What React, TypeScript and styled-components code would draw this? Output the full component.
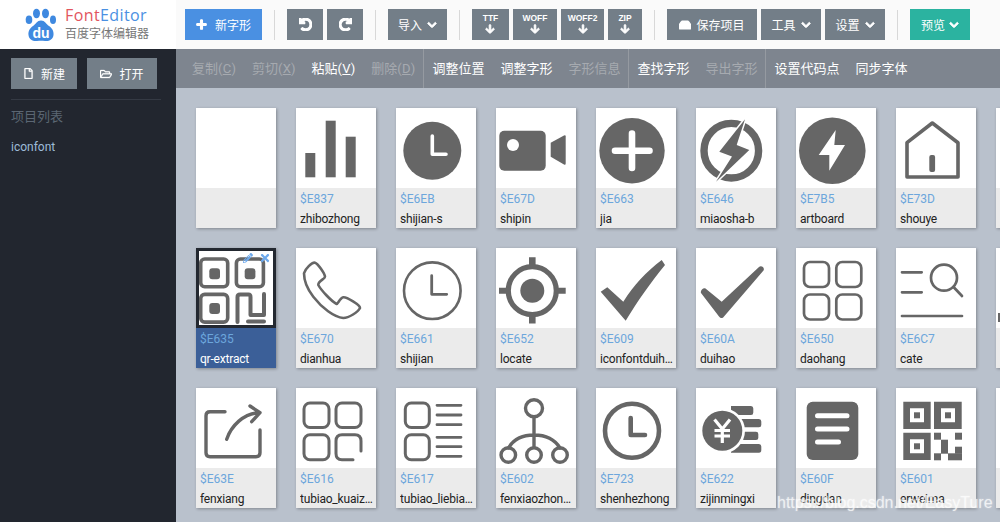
import React from 'react'
import styled, { createGlobalStyle } from 'styled-components'
import {
  FaPlus, FaUndo, FaRedo, FaChevronDown, FaArrowDown, FaHdd,
  FaRegFile, FaRegFolderOpen, FaPencilAlt, FaTimes,
} from 'react-icons/fa'

const GRAY = '#666'

const Bars = () => (
  <Glyph>
    <rect x="9.3" y="45" width="10" height="24.3" />
    <rect x="29.7" y="12.7" width="10" height="56.6" />
    <rect x="49.7" y="28.7" width="10" height="40.6" />
  </Glyph>
)

const ClockSolid = () => (
  <Glyph>
    <circle cx="36.3" cy="42.7" r="29" />
    <path d="M36.3 28V46.3H50" fill="none" stroke="#fff" strokeWidth="3.6" strokeLinecap="round" strokeLinejoin="round" />
  </Glyph>
)

const Video = () => (
  <Glyph>
    <rect x="3.3" y="22.7" width="46.4" height="40" rx="5" />
    <circle cx="17" cy="37" r="6" fill="#fff" />
    <path d="M54.7 34.7L68 27.4Q69.7 26.6 69.7 28.4V55.6Q69.7 57.4 68 56.6L54.7 48.7Z" />
  </Glyph>
)

const PlusCircle = () => (
  <Glyph>
    <circle cx="36" cy="42.7" r="32.7" />
    <path d="M19 42.7H53.5M36 25.5V60" stroke="#fff" strokeWidth="6.6" strokeLinecap="round" />
  </Glyph>
)

const FlashRing = () => (
  <Glyph>
    <circle cx="35.3" cy="42.7" r="27.3" fill="none" stroke={GRAY} strokeWidth="7.4" />
    <path d="M49 11.3L23.3 43.7L36 48.5L20 73.7L53.3 42L40.7 37Z" stroke="#fff" strokeWidth="3" paintOrder="stroke" />
  </Glyph>
)

const FlashCircle = () => (
  <Glyph>
    <circle cx="36.3" cy="42.7" r="33.3" />
    <path d="M39.7 22L22.7 47H33.3V62.7L49 37H38.3Z" fill="#fff" />
  </Glyph>
)

const House = () => (
  <Glyph>
    <Line as="path" d="M36.3 15L11 34.7V69H62V34.7Z" strokeWidth="3.6" />
    <rect x="33.3" y="47" width="5.8" height="17" rx="2" />
  </Glyph>
)

const QrExtract = () => (
  <Glyph>
    <Line as="rect" x="4.7" y="11" width="27" height="27.7" rx="4" strokeWidth="3.6" />
    <Line as="rect" x="40.4" y="11" width="27" height="27.7" rx="4" strokeWidth="3.6" />
    <Line as="rect" x="4.7" y="46.4" width="27" height="27.7" rx="4" strokeWidth="3.6" />
    <rect x="13.3" y="20.3" width="10.7" height="11" rx="3" />
    <rect x="48.7" y="20.3" width="10.7" height="11" rx="3" />
    <rect x="13.3" y="55" width="10.7" height="11" rx="3" />
    <Line as="path" d="M41.5 74V49Q41.5 46.5 44 46.5H52.5Q54.5 46.5 54.5 49V67H68V46M52 73.5H68" strokeWidth="4" />
  </Glyph>
)

const Phone = () => (
  <Glyph>
    <Line
      as="path"
      d="M19 14.7C16 14 9 21 8 25.3C8 33 12 42 17.3 48.7C26 60 38 69 47.3 70C53 70 62 64 64 60C64 57 51 49 47.3 49.3C44 50 42 56 40.7 56C35 53 25 42 22.3 37C22 33 29 31 29 28.7C29 26 22 15.5 19 14.7Z"
      strokeWidth="2.6"
    />
  </Glyph>
)

const ClockThin = () => (
  <Glyph>
    <Line as="circle" cx="36.3" cy="42.7" r="28.3" strokeWidth="2.6" />
    <Line as="path" d="M35.7 27.7V46.3H50.7" strokeWidth="2.8" />
  </Glyph>
)

const Locate = () => (
  <Glyph>
    <Line as="circle" cx="36.3" cy="42.7" r="24" strokeWidth="5.2" />
    <circle cx="36.3" cy="42.7" r="12" />
    <path d="M33 9.3h6.6V20H33zM33 65.5h6.6v10H33zM3 39.7H13v6H3zM60 39.7H69.7v6H60z" />
  </Glyph>
)

const CheckBig = () => (
  <Glyph>
    <path d="M4.7 43.7L11.3 39.3L27.3 53.7C38 37 50 24 65.7 12L69 17C55 34 41 54 29.7 72.7Z" />
  </Glyph>
)

const CheckRound = () => (
  <Glyph>
    <path d="M5 45C4 43 7 39.5 9.5 40.5L25.7 53.7L63 19C65.5 17 69 20 67.5 22.5L28 68.5C26.5 70.5 24.5 70.5 23 68.5Z" />
  </Glyph>
)

const Grid4 = () => (
  <Glyph>
    <Line as="rect" x="8" y="14" width="25" height="25" rx="6" strokeWidth="2.7" />
    <Line as="rect" x="40.3" y="14" width="25" height="25" rx="6" strokeWidth="2.7" />
    <Line as="rect" x="8" y="46.5" width="25" height="25" rx="6" strokeWidth="2.7" />
    <Line as="rect" x="40.3" y="46.5" width="25" height="25" rx="6" strokeWidth="2.7" />
  </Glyph>
)

const Cate = () => (
  <Glyph>
    <Line as="path" d="M6 24.3H25.7M6 44.3H25.7M6 68H66" strokeWidth="2.7" />
    <Line as="circle" cx="48" cy="29.7" r="13" strokeWidth="2.7" />
    <Line as="path" d="M57.5 39L66 48" strokeWidth="2.7" />
  </Glyph>
)

const Share = () => (
  <Glyph>
    <Line as="path" d="M29 23.7H14Q10 23.7 10 27.7V64.7Q10 68.7 14 68.7H60Q64 68.7 64 64.7V42" strokeWidth="3.4" />
    <Line as="path" d="M30.7 51.3C35 38 48 25 63 24.7M54 18L64 24.7L55.7 33.7" strokeWidth="3.4" />
  </Glyph>
)

const GridOpen = () => (
  <Glyph>
    <Line as="rect" x="8" y="15" width="25" height="24.5" rx="6" strokeWidth="3" />
    <Line as="rect" x="40" y="15" width="25" height="24.5" rx="6" strokeWidth="3" />
    <Line as="rect" x="8" y="46.7" width="25" height="25" rx="6" strokeWidth="3" />
    <Line as="path" d="M65 63V53Q65 46.7 59 46.7H46Q40 46.7 40 53V65.5Q40 71.7 46 71.7H57" strokeWidth="3" />
  </Glyph>
)

const ListGrid = () => (
  <Glyph>
    <Line as="rect" x="9.3" y="15" width="24" height="24.5" rx="6" strokeWidth="3" />
    <Line as="rect" x="9.3" y="46.7" width="24" height="25" rx="6" strokeWidth="3" />
    <Line as="path" d="M41 17.3H65M41 27H65M41 36.7H65M41 49.3H65M41 58.7H65M41 68.3H65" strokeWidth="2.8" />
  </Glyph>
)

const Tree = () => (
  <Glyph>
    <Line as="circle" cx="38" cy="20.3" r="8.5" strokeWidth="3.4" />
    <Line as="path" d="M38 29V58.5M12.5 60Q20 47 38 47T64 60" strokeWidth="3.4" />
    <Line as="circle" cx="12.3" cy="67" r="7.3" strokeWidth="3.4" />
    <Line as="circle" cx="38" cy="67" r="7.3" strokeWidth="3.4" />
    <Line as="circle" cx="64" cy="67" r="7.3" strokeWidth="3.4" />
  </Glyph>
)

const ClockBold = () => (
  <Glyph>
    <Line as="circle" cx="36" cy="42.7" r="27" strokeWidth="4.6" />
    <Line as="path" d="M34.7 30V47H49" strokeWidth="4.6" />
  </Glyph>
)

const Coins = () => (
  <Glyph>
    <path d="M35 18H55Q57.3 18 57.3 20.5V24.5Q57.3 27 55 27H35ZM35 31H63Q65.3 31 65.3 33.5V37Q65.3 39.3 63 39.3H35ZM35 43.7H60Q62.3 43.7 62.3 46V50Q62.3 52 60 52H35ZM35 56H63Q65.3 56 65.3 58.5V62Q65.3 64.7 63 64.7H35Z" />
    <circle cx="26.3" cy="42.7" r="22.7" fill="#fff" />
    <circle cx="26.3" cy="42.7" r="20" />
    <path d="M18.5 31.5L26.3 41L34 31.5M26.3 41V55M18.5 42.5H34M18.5 48H34" fill="none" stroke="#fff" strokeWidth="3.2" />
  </Glyph>
)

const Order = () => (
  <Glyph>
    <rect x="10.7" y="13.7" width="51.6" height="58.3" rx="6" />
    <path d="M21.5 27.7H51M21.5 41H51M21.5 54H42.5" stroke="#fff" strokeWidth="5" strokeLinecap="round" />
  </Glyph>
)

const Qr = () => (
  <Glyph>
    <path fillRule="evenodd" d="M7.3 13.7H34.7V41H7.3ZM14 20.3V34.3H28V20.3Z" />
    <rect x="18" y="24.3" width="6" height="6" />
    <path fillRule="evenodd" d="M38 13.7H65.7V41H38ZM45 20.3V34.3H59V20.3Z" />
    <rect x="49" y="24.3" width="6" height="6" />
    <path fillRule="evenodd" d="M7.3 44.7H34.7V72H7.3ZM14 51.3V65.3H28V51.3Z" />
    <rect x="18" y="55.3" width="6" height="6" />
    <rect x="38" y="44.7" width="7" height="7" />
    <rect x="59" y="44.7" width="7" height="7" />
    <rect x="45" y="51.7" width="7" height="14" />
    <rect x="59" y="58.7" width="7" height="7" />
    <rect x="52" y="65.3" width="14" height="7" />
    <rect x="38" y="65.3" width="7" height="7" />
  </Glyph>
)

const Sliver = () => (
  <Glyph>
    <rect x="2" y="65" width="3" height="9" />
  </Glyph>
)

type GlyphItem = { code?: string; name?: string; icon?: React.FC; active?: boolean }

const glyphs: GlyphItem[] = [
  {},
  { code: '$E837', name: 'zhibozhong', icon: Bars },
  { code: '$E6EB', name: 'shijian-s', icon: ClockSolid },
  { code: '$E67D', name: 'shipin', icon: Video },
  { code: '$E663', name: 'jia', icon: PlusCircle },
  { code: '$E646', name: 'miaosha-b', icon: FlashRing },
  { code: '$E7B5', name: 'artboard', icon: FlashCircle },
  { code: '$E73D', name: 'shouye', icon: House },
  {},
  { code: '$E635', name: 'qr-extract', icon: QrExtract, active: true },
  { code: '$E670', name: 'dianhua', icon: Phone },
  { code: '$E661', name: 'shijian', icon: ClockThin },
  { code: '$E652', name: 'locate', icon: Locate },
  { code: '$E609', name: 'iconfontduihaoxuanzhong', icon: CheckBig },
  { code: '$E60A', name: 'duihao', icon: CheckRound },
  { code: '$E650', name: 'daohang', icon: Grid4 },
  { code: '$E6C7', name: 'cate', icon: Cate },
  { icon: Sliver },
  { code: '$E63E', name: 'fenxiang', icon: Share },
  { code: '$E616', name: 'tubiao_kuaizhuangpailie', icon: GridOpen },
  { code: '$E617', name: 'tubiao_liebiaozhanshi', icon: ListGrid },
  { code: '$E602', name: 'fenxiaozhongxin', icon: Tree },
  { code: '$E723', name: 'shenhezhong', icon: ClockBold },
  { code: '$E622', name: 'zijinmingxi', icon: Coins },
  { code: '$E60F', name: 'dingdan', icon: Order },
  { code: '$E601', name: 'erweima', icon: Qr },
  {},
]

const Logo = () => (
  <LogoMark viewBox="0 0 32 34">
    <ellipse cx="5" cy="11.7" rx="3.3" ry="4.3" />
    <ellipse cx="12.5" cy="5.5" rx="3.5" ry="4.8" />
    <ellipse cx="21.5" cy="5.5" rx="3.5" ry="4.8" />
    <ellipse cx="29" cy="11.7" rx="3" ry="4.3" />
    <path d="M17 12.5C21 12.5 22 16 25 18C28 20 30 23 29.5 27C29 31.5 25 33.5 21 33C18 32.6 16 32.6 13 33C9 33.5 5 31.5 4.5 27C4 23 6 20 9 18C12 16 13 12.5 17 12.5Z" />
    <LogoText x="17" y="30">du</LogoText>
  </LogoMark>
)

const ExportButton = ({ label, w }: { label: string; w: number }) => (
  <GrayButton $w={w}>
    <ExportInner>
      <ExportLabel>{label}</ExportLabel>
      <FaArrowDown size={10} />
    </ExportInner>
  </GrayButton>
)

function App() {
  return (
    <Page>
      <GlobalStyle />
      <Header>
        <Brand>
          <Logo />
          <BrandText>
            <BrandName><em>Font</em>Editor</BrandName>
            <BrandSub>百度字体编辑器</BrandSub>
          </BrandText>
        </Brand>
        <HeaderBar>
          <BlueButton><FaPlus size={11} />新字形</BlueButton>
          <Divider />
          <Group>
            <GrayButton $w={36}><FaUndo size={13} /></GrayButton>
            <GrayButton $w={36}><FaRedo size={13} /></GrayButton>
          </Group>
          <Divider />
          <GrayButton $w={59}>导入<FaChevronDown size={10} /></GrayButton>
          <Divider />
          <Group>
            <ExportButton label="TTF" w={37} />
            <ExportButton label="WOFF" w={44} />
            <ExportButton label="WOFF2" w={43} />
            <ExportButton label="ZIP" w={34} />
          </Group>
          <Divider />
          <Group>
            <GrayButton $w={90}><FaHdd size={12} />保存项目</GrayButton>
            <GrayButton $w={60}>工具<FaChevronDown size={10} /></GrayButton>
            <GrayButton $w={60}>设置<FaChevronDown size={10} /></GrayButton>
          </Group>
          <Divider />
          <GreenButton>预览<FaChevronDown size={10} /></GreenButton>
        </HeaderBar>
      </Header>
      <Body>
        <Sidebar>
          <SideButtons>
            <SideButton $w={66}><FaRegFile size={11} />新建</SideButton>
            <SideButton $w={70}><FaRegFolderOpen size={12} />打开</SideButton>
          </SideButtons>
          <SideTitle>项目列表</SideTitle>
          <ProjectItem>iconfont</ProjectItem>
        </Sidebar>
        <Main>
          <Toolbar>
            <ToolGroup>
              <Tool $off>复制(<u>C</u>)</Tool>
              <Tool $off>剪切(<u>X</u>)</Tool>
              <Tool>粘贴(<u>V</u>)</Tool>
              <Tool $off>删除(<u>D</u>)</Tool>
            </ToolGroup>
            <ToolGroup>
              <Tool>调整位置</Tool>
              <Tool>调整字形</Tool>
              <Tool $off>字形信息</Tool>
            </ToolGroup>
            <ToolGroup>
              <Tool>查找字形</Tool>
              <Tool $off>导出字形</Tool>
            </ToolGroup>
            <ToolGroup>
              <Tool>设置代码点</Tool>
              <Tool>同步字体</Tool>
            </ToolGroup>
          </Toolbar>
          <CardGrid>
            {glyphs.map((g, i) => {
              const Icon = g.icon
              return (
                <Card key={i}>
                  <IconBox $active={g.active}>
                    {Icon && <Icon />}
                    {g.active && (
                      <CardActions>
                        <FaPencilAlt size={10} />
                        <FaTimes size={12} />
                      </CardActions>
                    )}
                  </IconBox>
                  <Info $active={g.active}>
                    <Code>{g.code}</Code>
                    <Name $active={g.active}>{g.name}</Name>
                  </Info>
                </Card>
              )
            })}
          </CardGrid>
        </Main>
      </Body>
      <Watermark>https://blog.csdn.net/EasyTure</Watermark>
    </Page>
  )
}

export default App

const GlobalStyle = createGlobalStyle`
html, body {
  margin: 0;
  height: 522px;
  overflow: hidden;
}
* {
  box-sizing: border-box;
}
`
const Page = styled.div`
position: relative;
width: 1000px;
height: 522px;
overflow: hidden;
display: flex;
flex-direction: column;
font-family: Roboto, "Noto Sans CJK SC", sans-serif;
font-size: 12px;
`
const Header = styled.div`
display: flex;
height: 49px;
background: #fafafa;
`
const Brand = styled.div`
width: 176px;
background: #fff;
display: flex;
align-items: center;
gap: 9px;
padding-left: 24px;
`
const LogoMark = styled.svg`
width: 32px;
height: 34px;
fill: #3f89e0;
`
const LogoText = styled.text`
fill: #fff;
font-family: "Liberation Sans", sans-serif;
font-size: 14px;
font-weight: 700;
text-anchor: middle;
`
const BrandText = styled.div`
display: flex;
flex-direction: column;
margin-top: -2px;
`
const BrandName = styled.div`
font-family: "Open Sans", sans-serif;
font-size: 16px;
line-height: 20px;
letter-spacing: 0.4px;
color: #4a90e2;
em {
  font-style: normal;
  color: #e2555e;
}
`
const BrandSub = styled.div`
margin-top: 1px;
font-size: 12px;
line-height: 16px;
color: #777;
`
const HeaderBar = styled.div`
display: flex;
align-items: center;
padding-left: 9px;
`
const Group = styled.div`
display: flex;
gap: 4px;
`
const Divider = styled.div`
width: 1px;
height: 30px;
margin: 0 12px;
background: #d8d8d8;
`
const Button = styled.div`
height: 31px;
display: flex;
align-items: center;
justify-content: center;
color: #fff;
font-size: 12px;
svg {
  stroke: currentColor;
  stroke-width: 50;
}
`
const GrayButton = styled(Button)<{ $w: number }>`
width: ${(p) => p.$w}px;
gap: 5px;
background: #737e88;
`
const BlueButton = styled(Button)`
width: 77px;
gap: 8px;
background: #4a90e2;
`
const GreenButton = styled(Button)`
width: 60px;
gap: 4px;
background: #2bb3a0;
`
const ExportInner = styled.div`
display: flex;
flex-direction: column;
align-items: center;
margin-top: -2px;
`
const ExportLabel = styled.span`
font-family: "Liberation Sans", sans-serif;
font-size: 8.5px;
font-weight: 700;
line-height: 11px;
`
const Body = styled.div`
flex: 1;
display: flex;
min-height: 0;
`
const Sidebar = styled.div`
width: 176px;
background: #22262f;
padding: 9px 11px 0;
`
const SideButtons = styled.div`
display: flex;
gap: 10px;
padding-bottom: 10px;
margin-right: 4px;
border-bottom: 1px solid #353a44;
`
const SideButton = styled(GrayButton)`
gap: 7px;
svg {
  stroke-width: 15;
}
`
const SideTitle = styled.div`
margin-top: 8px;
font-size: 13px;
line-height: 18px;
color: #5b6673;
`
const ProjectItem = styled.div`
margin-top: 12px;
line-height: 18px;
color: #9dbbd8;
`
const Main = styled.div`
flex: 1;
min-width: 0;
background: #b9c1cc;
display: flex;
flex-direction: column;
`
const Toolbar = styled.div`
height: 39px;
flex-shrink: 0;
display: flex;
background: #7e858f;
`
const ToolGroup = styled.div`
display: flex;
align-items: center;
gap: 16px;
padding: 0 8px 2px;
border-right: 1px solid #959aa1;
&:first-child {
  padding-left: 16px;
}
&:last-child {
  border-right: none;
}
`
const Tool = styled.span<{ $off?: boolean }>`
font-size: 13px;
color: ${(p) => (p.$off ? '#a6aab0' : '#fff')};
u {
  margin: 0 0.25px;
}
`
const CardGrid = styled.div`
display: grid;
grid-template-columns: repeat(9, 80px);
gap: 20px;
padding: 20px;
width: 920px;
`
const Card = styled.div`
width: 80px;
height: 120px;
box-shadow: 1px 1px 3px rgba(0, 0, 0, 0.3);
`
const IconBox = styled.div<{ $active?: boolean }>`
position: relative;
height: 80px;
background: #fff;
${(p) => p.$active && `
  outline: 3px solid #232830;
  outline-offset: -3px;
`}
`
const Glyph = styled.svg.attrs({ viewBox: '0 0 80 80' })`
display: block;
width: 80px;
height: 80px;
fill: #666;
`
const Line = styled.path`
fill: none;
stroke: #666;
stroke-linecap: round;
stroke-linejoin: round;
`
const CardActions = styled.div`
position: absolute;
top: 4px;
right: 5px;
display: flex;
align-items: center;
gap: 6px;
color: #6da9ec;
`
const Info = styled.div<{ $active?: boolean }>`
height: 40px;
padding: 0 0 0 4px;
background: ${(p) => (p.$active ? '#3b5f98' : '#ebebeb')};
`
const Code = styled.div`
height: 20px;
line-height: 20px;
padding-top: 1px;
color: #6ca6dc;
`
const Name = styled.div<{ $active?: boolean }>`
height: 20px;
line-height: 20px;
padding: 1px 2px 0 0;
letter-spacing: -0.2px;
color: ${(p) => (p.$active ? '#fff' : '#222')};
white-space: nowrap;
overflow: hidden;
text-overflow: ellipsis;
`
const Watermark = styled.div`
position: absolute;
left: 777px;
top: 492px;
font-family: "Liberation Sans", sans-serif;
font-size: 16px;
line-height: 22px;
white-space: nowrap;
color: rgba(255, 255, 255, 0.7);
text-shadow: 0 0 2px rgba(255, 255, 255, 0.5);
`
